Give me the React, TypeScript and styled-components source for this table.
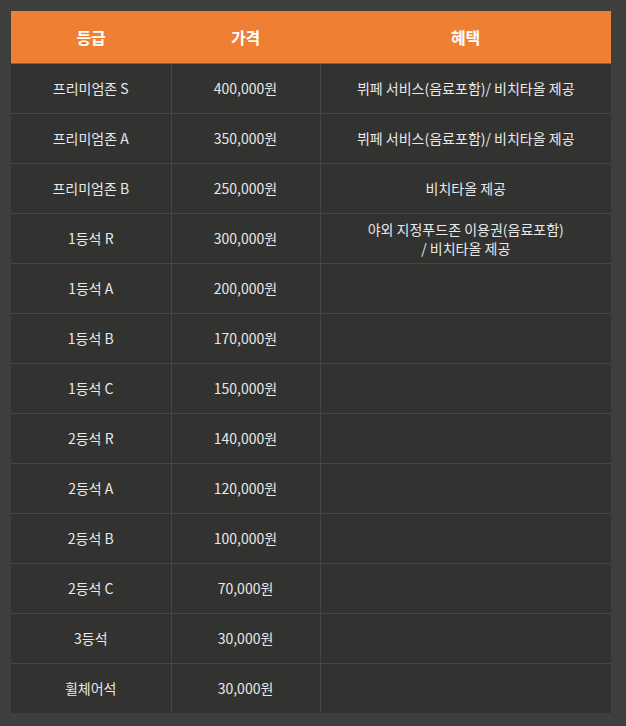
import React from 'react';
import styled, { createGlobalStyle } from 'styled-components';

const GlobalStyle = createGlobalStyle`
  html, body {
    margin: 0;
    padding: 0;
    background: #3e3e3e;
  }
  body {
    font-family: 'Noto Sans CJK KR', 'Noto Sans', sans-serif;
  }
`;

const Page = styled.div`
  padding: 11px 15px 13px 11px;
  width: 600px;
`;

const Table = styled.table`
  width: 600px;
  border-collapse: collapse;
  table-layout: fixed;
  background: #323231;
`;

const HeadCell = styled.th<{ $width: number }>`
  width: ${(p) => p.$width}px;
  height: 52px;
  padding: 0;
  background: #ef7f33;
  color: #ffffff;
  font-size: 16px;
  font-weight: 700;
  text-align: center;
  letter-spacing: -0.2px;
  border-bottom: 1px solid #9a5a2c;
`;

const Row = styled.tr`
  & + & td {
    border-top: 1px solid #474746;
  }
`;

const Cell = styled.td`
  height: 49px;
  padding: 0 4px;
  color: #e8e8e8;
  font-size: 14px;
  line-height: 19px;
  text-align: center;
  letter-spacing: 0;
  & + & {
    border-left: 1px solid #474746;
  }
`;

type Seat = { grade: string; price: string; benefit?: React.ReactNode };

const seats: Seat[] = [
  { grade: '프리미엄존 S', price: '400,000원', benefit: '뷔페 서비스(음료포함)/ 비치타올 제공' },
  { grade: '프리미엄존 A', price: '350,000원', benefit: '뷔페 서비스(음료포함)/ 비치타올 제공' },
  { grade: '프리미엄존 B', price: '250,000원', benefit: '비치타올 제공' },
  {
    grade: '1등석 R',
    price: '300,000원',
    benefit: (
      <>
        야외 지정푸드존 이용권(음료포함)
        <br />/ 비치타올 제공
      </>
    ),
  },
  { grade: '1등석 A', price: '200,000원' },
  { grade: '1등석 B', price: '170,000원' },
  { grade: '1등석 C', price: '150,000원' },
  { grade: '2등석 R', price: '140,000원' },
  { grade: '2등석 A', price: '120,000원' },
  { grade: '2등석 B', price: '100,000원' },
  { grade: '2등석 C', price: '70,000원' },
  { grade: '3등석', price: '30,000원' },
  { grade: '휠체어석', price: '30,000원' },
];

export default function App() {
  return (
    <Page>
      <GlobalStyle />
      <Table>
        <thead>
          <tr>
            <HeadCell $width={160}>등급</HeadCell>
            <HeadCell $width={149}>가격</HeadCell>
            <HeadCell $width={291}>혜택</HeadCell>
          </tr>
        </thead>
        <tbody>
          {seats.map((s) => (
            <Row key={s.grade}>
              <Cell>{s.grade}</Cell>
              <Cell>{s.price}</Cell>
              <Cell>{s.benefit}</Cell>
            </Row>
          ))}
        </tbody>
      </Table>
    </Page>
  );
}
